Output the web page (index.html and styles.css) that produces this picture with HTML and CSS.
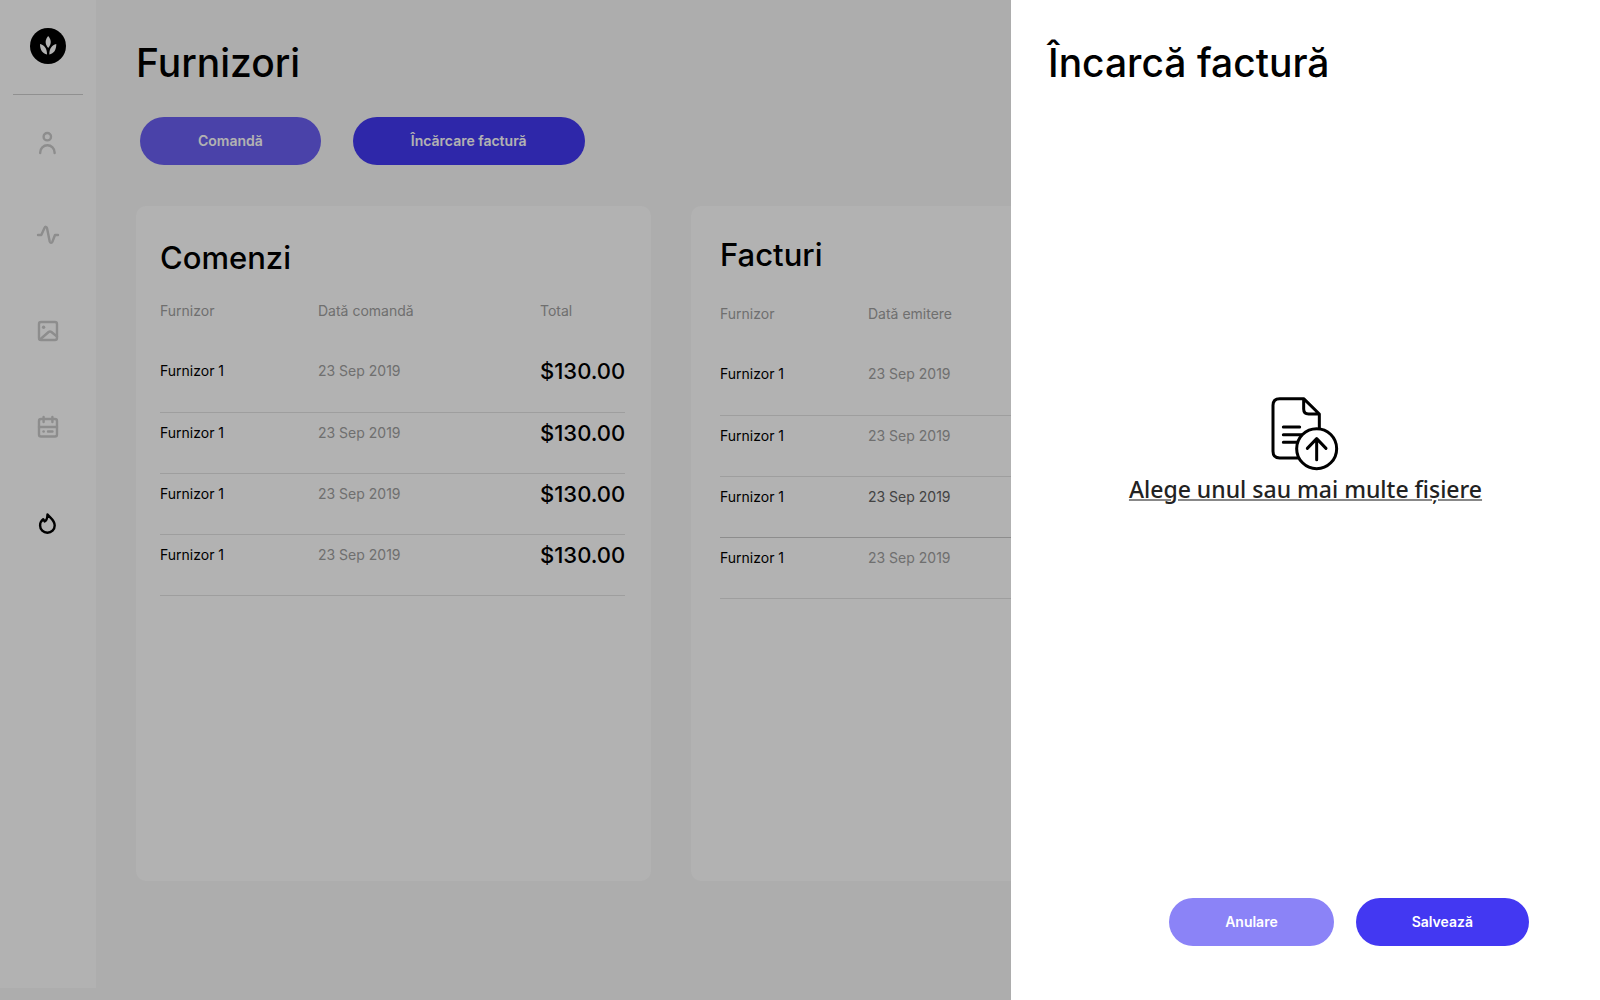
FILE: index.html
```html
<!DOCTYPE html>
<html lang="ro">
<head>
<meta charset="utf-8">
<meta name="viewport" content="width=device-width, initial-scale=1">
<title>Furnizori</title>
<link rel="stylesheet" href="styles.css">
</head>
<body>
<div class="app">
  <aside class="sidebar">
    <a class="logo" href="#" aria-label="Logo">
      <svg width="36" height="36" viewBox="0 0 36 36"><circle cx="18" cy="18" r="18"/><g fill="#fff"><path d="M18.200 8C21.600 12 21.600 16 18.200 20C14.800 16 14.800 12 18.200 8Z"/><path d="M10 16C14.500 17 17 20.500 17 26.500C12.500 25.500 10 22 10 16Z"/><path d="M26.300 16C21.800 17 19.300 20.500 19.300 26.500C23.800 25.500 26.300 22 26.300 16Z"/></g></svg>
    </a>
    <nav class="nav">
      <a class="nav-link" href="#" aria-label="Profil"><svg class="icon" viewBox="0 0 32 32"><circle cx="15.300" cy="13.700" r="3.700"/><path d="M8.200 30v-.500a7.200 7.200 0 0 1 14.400 0v.500"/></svg></a>
      <a class="nav-link" href="#" aria-label="Activitate"><svg class="icon" viewBox="0 0 32 32"><path d="M6 16h3.300l3.300-7.300c.600-1.300 2.100-1.100 2.400.300l2.700 13.500c.400 1.600 2.100 1.700 2.700.300L23 16h3"/></svg></a>
      <a class="nav-link" href="#" aria-label="Imagini"><svg class="icon" viewBox="0 0 32 32"><rect x="7" y="7" width="18" height="18" rx="2"/><circle class="dot" cx="11.600" cy="12.200" r="1.700"/><path d="M8 24.500l8.600-7.500a2.200 2.200 0 0 1 2.800 0L25 21.500"/></svg></a>
      <a class="nav-link" href="#" aria-label="Calendar"><svg class="icon" viewBox="0 0 32 32"><rect x="7" y="8" width="18" height="17.500" rx="2"/><path d="M11.600 6v5M20.400 6v5M7 16h18M16 20.500h4.500"/><circle class="dot" cx="11.600" cy="20.500" r="1.300"/></svg></a>
      <a class="nav-link active" href="#" aria-label="Furnizori"><svg class="icon" viewBox="0 0 32 32"><path d="M15.500 7.500C17.500 10.500 22.700 13 22.700 18.500A7.300 7.300 0 0 1 8.100 18.500C8.100 15.800 9.300 13.600 11.200 12.200L12.600 14.500C14.700 13.500 15.400 10.500 15.500 7.500Z"/></svg></a>
    </nav>
  </aside>
  <main class="main">
    <h1 class="title">Furnizori</h1>
    <div class="actions">
      <button class="btn btn-soft" type="button">Comandă</button>
      <button class="btn btn-primary" type="button">Încărcare factură</button>
    </div>
    <div class="cards">
      <section class="card">
        <h2 class="card-title">Comenzi</h2>
        <table class="table">
          <thead><tr><th class="col-name">Furnizor</th><th class="col-date">Dată comandă</th><th>Total</th></tr></thead>
          <tbody>
            <tr><td>Furnizor 1</td><td class="date">23 Sep 2019</td><td class="total">$130.00</td></tr>
            <tr><td>Furnizor 1</td><td class="date">23 Sep 2019</td><td class="total">$130.00</td></tr>
            <tr><td>Furnizor 1</td><td class="date">23 Sep 2019</td><td class="total">$130.00</td></tr>
            <tr><td>Furnizor 1</td><td class="date">23 Sep 2019</td><td class="total">$130.00</td></tr>
          </tbody>
        </table>
      </section>
      <section class="card card-invoices">
        <h2 class="card-title">Facturi</h2>
        <table class="table">
          <thead><tr><th class="col-name">Furnizor</th><th>Dată emitere</th></tr></thead>
          <tbody>
            <tr><td>Furnizor 1</td><td class="date">23 Sep 2019</td></tr>
            <tr><td>Furnizor 1</td><td class="date">23 Sep 2019</td></tr>
            <tr class="current"><td>Furnizor 1</td><td class="date">23 Sep 2019</td></tr>
            <tr><td>Furnizor 1</td><td class="date">23 Sep 2019</td></tr>
          </tbody>
        </table>
      </section>
    </div>
  </main>
</div>
<div class="overlay">
  <form class="drawer">
    <h2 class="title">Încarcă factură</h2>
    <div class="drop">
      <input class="file-input" type="file" id="files" multiple>
      <label class="file-label" for="files">
        <svg class="upload" viewBox="480 46 210 228"><path d="M575 235H509Q489 235 489 215V77Q489 57 509 57H581L628 103V150M581 57V88Q581 103 596 103H628M520 142H569M520 165H578M520 188H562"/><circle cx="620" cy="207" r="60"/><path d="M620 240V177M592 206L620 177L648 206"/></svg>
        <span class="file-text">Alege unul sau mai multe fișiere</span>
      </label>
    </div>
    <div class="drawer-actions">
      <button class="btn btn-cancel" type="button">Anulare</button>
      <button class="btn btn-primary" type="submit">Salvează</button>
    </div>
  </form>
</div>
</body>
</html>
```
FILE: styles.css
```css
* { box-sizing: border-box; }

body {
  margin: 0;
  background: #f8f8f8;
  color: #000;
  font: 400 14px/20px Inter, "Liberation Sans", sans-serif;
}

.app {
  display: flex;
  min-height: 100vh;
}

.sidebar {
  flex: 0 0 96px;
  margin-bottom: 12px;
  padding: 28px 13px 0;
  background: #fff;
}

.logo {
  display: flex;
  justify-content: center;
  padding-bottom: 30px;
  border-bottom: 1px solid #cecece;
}

.nav {
  display: flex;
  flex-direction: column;
  align-items: center;
  gap: 64px;
  padding-top: 28px;
}

.nav-link {
  display: flex;
  color: #cacaca;
}

.nav-link.active { color: #000; }

.icon {
  width: 32px;
  height: 32px;
  fill: none;
  stroke: currentColor;
  stroke-width: 2.4;
  stroke-linecap: round;
  stroke-linejoin: round;
}

.icon .dot {
  fill: currentColor;
  stroke: none;
}

.main {
  flex: 1;
  padding: 38px 40px;
}

.title {
  margin: 0;
  font-size: 39px;
  line-height: 50px;
  font-weight: 500;
}

.actions {
  display: flex;
  gap: 32px;
  padding: 29px 4px 41px;
}

.btn {
  height: 48px;
  padding: 0 58px;
  border: 0;
  border-radius: 24px;
  color: #fff;
  font: 600 14px/20px Inter, "Liberation Sans", sans-serif;
  cursor: pointer;
}

.btn-soft { background: #6a5ff2; }
.btn-primary { background: #4338f2; }
.btn-cancel { background: #8b83f7; }

.cards {
  display: grid;
  grid-template-columns: 515fr 869fr;
  gap: 40px;
}

.card {
  min-height: 675px;
  padding: 32px 26px 32px 24px;
  border-radius: 10px;
  background: #fff;
}

.card-title {
  margin: 0 0 12px;
  font-size: 31px;
  line-height: 40px;
  font-weight: 500;
}

.card-invoices { padding: 29px; }
.card-invoices .card-title { margin-bottom: 18px; }

.table {
  width: 100%;
  border-collapse: collapse;
  table-layout: fixed;
}

.table th,
.table td {
  height: 61px;
  padding: 0 0 20px;
  text-align: left;
  font-weight: 400;
}

.table th,
.date { color: #a0a0a0; }

.table td { border-bottom: 1px solid #e2e2e2; }
.current .date { color: #606060; }
.table .current td { border-bottom-color: #cacaca; }

.col-name { width: 158px; }
.col-date { width: 222px; }
.card-invoices .col-name { width: 148px; }

.table .total {
  font-size: 22px;
  font-weight: 500;
}

.overlay {
  position: fixed;
  inset: 0;
  display: flex;
  justify-content: flex-end;
  background: rgba(0, 0, 0, 0.3);
}

.drawer {
  display: flex;
  flex-direction: column;
  width: 589px;
  max-width: 100%;
  padding: 38px 71px 54px 37px;
  background: #fff;
}

.drop {
  flex: 1;
  display: flex;
  justify-content: center;
  padding: 307px 0 0 34px;
}

.file-input {
  position: absolute;
  width: 1px;
  height: 1px;
  opacity: 0;
}

.file-label {
  display: flex;
  flex-direction: column;
  align-items: center;
  align-self: flex-start;
  cursor: pointer;
}

.upload {
  width: 70px;
  height: 76px;
  fill: none;
  stroke: #000;
  stroke-width: 9;
  stroke-linecap: round;
  stroke-linejoin: round;
}

.upload circle { fill: #fff; }

.file-text {
  color: #222;
  font: 500 23px/36px "Noto Sans", "Open Sans", sans-serif;
  text-decoration: underline;
  text-decoration-color: #888;
  text-decoration-thickness: 2px;
  white-space: nowrap;
}

.drawer-actions {
  display: flex;
  justify-content: flex-end;
  gap: 22px;
}

.drawer-actions .btn { padding: 0 56px; }
```
